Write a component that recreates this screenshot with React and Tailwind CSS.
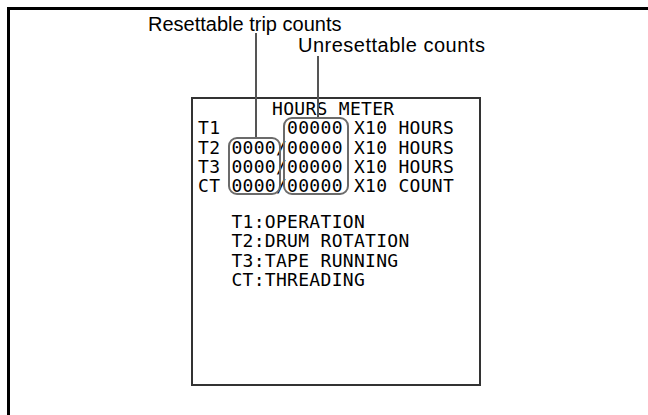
const rows = [
  "T1      00000 X10 HOURS",
  "T2 0000/00000 X10 HOURS",
  "T3 0000/00000 X10 HOURS",
  "CT 0000/00000 X10 COUNT",
];

const legend = ["T1:OPERATION", "T2:DRUM ROTATION", "T3:TAPE RUNNING", "CT:THREADING"];

export default function App() {
  return (
    <div className="w-[648px] h-[415px] bg-white overflow-hidden">
      <div className="relative ml-[7px] mt-[7px] h-[408px] border-l-[3px] border-t-[3px] border-black font-['Liberation_Sans',sans-serif] text-[20px] text-black">
        {/* callout labels */}
        <div className="ml-[138px] mt-[4px] leading-[20px]">Resettable trip counts</div>
        <div className="ml-[288px] mt-[1px] leading-[20px] tracking-[0.5px]">Unresettable counts</div>

        {/* display panel */}
        <div className="relative ml-[181px] mt-[42px] w-[290px] h-[289px] border-2 border-[#333] pl-[5px] font-['DejaVu_Sans_Mono',monospace] text-[18px] leading-[19.3px] tracking-[0.3px] whitespace-pre">
          <div className="pl-[74px]">HOURS METER</div>
          {rows.map((r) => (
            <div key={r}>{r}</div>
          ))}
          <div className="mt-[16.5px]">
            {legend.map((l) => (
              <div key={l}>{"   " + l}</div>
            ))}
          </div>

          {/* grouping outlines */}
          <div className="absolute left-[35px] top-[38px] w-[53px] h-[58px] rounded-[9px] border-2 border-[#6b6b6b]" />
          <div className="absolute left-[90px] top-[18px] w-[66px] h-[78px] rounded-[9px] border-2 border-[#6b6b6b]" />
        </div>

        {/* leader lines */}
        <div className="absolute left-[245px] top-[23px] w-[2px] h-[104px] bg-[#555]" />
        <div className="absolute left-[307px] top-[46px] w-[2px] h-[61px] bg-[#555]" />
      </div>
    </div>
  );
}
